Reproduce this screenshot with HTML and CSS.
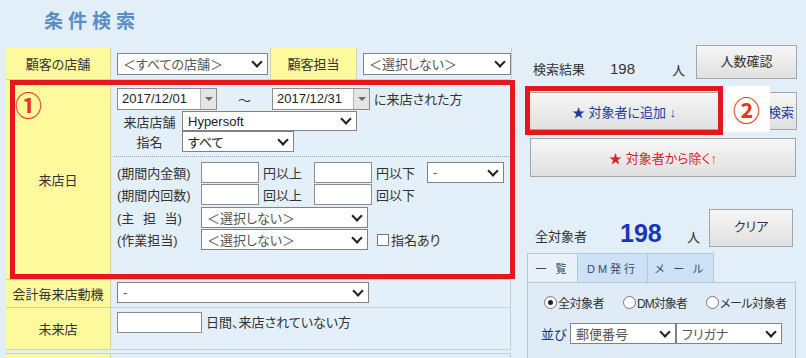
FILE: index.html
```html
<!DOCTYPE html>
<html lang="ja">
<head>
    <meta charset="UTF-8">
    <meta name="viewport" content="width=device-width, initial-scale=1.0">
    <title>条件検索</title>
    <link rel="stylesheet" href="styles.css">
</head>
<body>
    <div class="screen">
        <div class="left">
            <h1 class="title">条件検索</h1>
            <div class="form">
                <div class="row row-shop">
                    <div class="label">顧客の店舗</div>
                    <div class="cell cell-shop"><div class="sel sel-shop"><span>＜すべての店舗＞</span></div></div>
                    <div class="label label-staff">顧客担当</div>
                    <div class="cell"><div class="sel sel-staff"><span>＜選択しない＞</span></div></div>
                </div>
                <div class="row row-visit">
                    <div class="label">来店日</div>
                    <div class="cell visit">
                        <div class="line">
                            <div class="date"><span>2017/12/01</span><div class="drop"></div></div>
                            <span class="tilde">～</span>
                            <div class="date date-to"><span>2017/12/31</span><div class="drop"></div></div>
                            <span class="after">に来店された方</span>
                        </div>
                        <div class="line line-sub">
                            <span class="sub-label">来店店舗</span>
                            <div class="sel sel-store"><span class="dark">Hypersoft</span></div>
                        </div>
                        <div class="line line-sub">
                            <span class="sub-label">指名</span>
                            <div class="sel sel-nominate"><span class="dark">すべて</span></div>
                        </div>
                        <div class="dots"></div>
                        <div class="line line-q first">
                            <span class="q-label">(期間内金額)</span>
                            <div class="box"></div>
                            <span class="unit">円以上</span>
                            <div class="box"></div>
                            <span class="unit">円以下</span>
                            <div class="sel sel-range"><span>-</span></div>
                        </div>
                        <div class="line line-q">
                            <span class="q-label">(期間内回数)</span>
                            <div class="box"></div>
                            <span class="unit">回以上</span>
                            <div class="box"></div>
                            <span class="unit">回以下</span>
                        </div>
                        <div class="line line-q gap">
                            <span class="q-label spaced">(主 担 当)</span>
                            <div class="sel sel-person"><span>＜選択しない＞</span></div>
                        </div>
                        <div class="line line-q">
                            <span class="q-label">(作業担当)</span>
                            <div class="sel sel-person"><span>＜選択しない＞</span></div>
                            <span class="check"></span>
                            <span>指名あり</span>
                        </div>
                    </div>
                </div>
                <div class="row row-motive">
                    <div class="label">会計毎来店動機</div>
                    <div class="cell"><div class="sel sel-motive"><span>-</span></div></div>
                </div>
                <div class="row row-absent">
                    <div class="label">未来店</div>
                    <div class="cell cell-absent">
                        <div class="box box-days"></div>
                        <span class="after">日間、来店されていない方</span>
                    </div>
                </div>
                <div class="row row-more">
                    <div class="label"></div>
                    <div class="cell"></div>
                </div>
            </div>
            <div class="mark-box mark-box-1"></div>
            <span class="mark mark-1">①</span>
        </div>

        <div class="right">
            <div class="stat-row">
                <span class="stat-label">検索結果</span>
                <span class="stat-num">198</span>
                <span class="stat-unit">人</span>
                <div class="btn btn-count">人数確認</div>
            </div>
            <div class="add-row">
                <div class="btn btn-add">★ 対象者に追加 ↓</div>
                <div class="btn btn-search">検索</div>
            </div>
            <div class="btn btn-remove">★ 対象者から除く↑</div>
            <div class="stat-row total-row">
                <span class="total-label">全対象者</span>
                <span class="total-num">198</span>
                <span class="total-unit">人</span>
                <div class="btn btn-clear">クリア</div>
            </div>
            <div class="tabs">
                <div class="tab active">一 覧</div>
                <div class="tab">DM発行</div>
                <div class="tab">メ ー ル</div>
            </div>
            <div class="panel">
                <div class="radios">
                    <span class="radio on"></span><span class="radio-text">全対象者</span>
                    <span class="radio"></span><span class="radio-text radio-dm">DM対象者</span>
                    <span class="radio"></span><span class="radio-text radio-mail">メール対象者</span>
                </div>
                <div class="sort">
                    <span class="sort-label">並び</span>
                    <div class="sel sel-sort"><span>郵便番号</span></div>
                    <div class="sel sel-sort"><span>フリガナ</span></div>
                </div>
            </div>
            <div class="mark-box mark-box-2"></div>
            <div class="mark-cover"><span class="mark">②</span></div>
        </div>
    </div>
</body>
</html>
```

FILE: styles.css
```css
* {
    box-sizing: border-box;
}

body {
    margin: 0;
    width: 806px;
    height: 358px;
    overflow: hidden;
    background: #e2eff8;
    font-family: "Liberation Sans", "Noto Sans CJK JP", sans-serif;
    font-size: 13px;
    color: #333;
    font-feature-settings: "palt";
}

.screen {
    display: flex;
    height: 358px;
}

.left {
    width: 516px;
    flex: none;
    position: relative;
}

.title {
    margin: 0;
    height: 48px;
    padding: 10px 0 0 44px;
    font-size: 19px;
    line-height: 24px;
    font-weight: 700;
    letter-spacing: 5px;
    color: #5b8ec6;
}

/* form table */
.form {
    margin-left: 6px;
    width: 505px;
}
.row {
    display: flex;
    border-bottom: 1px solid #c6d0d8;
}
.label {
    width: 105px;
    flex: none;
    display: flex;
    align-items: center;
    justify-content: center;
    background: #fffa9e;
    border-right: 1px solid #d6d3a4;
    color: #333;
}
.cell {
    flex: 1;
    display: flex;
    align-items: center;
    padding-left: 6px;
    background: #e4f0f9;
    border-right: 1px solid #c6d0d8;
}
.row-shop {
    height: 32px;
}
.cell-shop {
    flex: none;
    width: 159px;
    border-right: none;
}
.label-staff {
    width: 87px;
    border-left: 1px solid #d6d3a4;
}
.row-visit {
    height: 200px;
}
.row-motive {
    height: 28px;
}
.row-motive .cell {
    align-items: flex-start;
    padding-top: 2px;
}
.row-absent {
    height: 42px;
}
.cell-absent {
    align-items: flex-start;
    padding-top: 4px;
}
.row-more {
    height: 20px;
    margin-top: 3px;
    border-top: 1px solid #c6d0d8;
}

/* controls */
.sel {
    display: flex;
    align-items: center;
    justify-content: space-between;
    height: 21px;
    padding: 0 6px 0 5px;
    background: #fff;
    border: 1px solid #828282;
    color: #555;
    white-space: nowrap;
}
.sel::after {
    content: "";
    width: 6px;
    height: 6px;
    margin-top: -4px;
    border-right: 2px solid #222;
    border-bottom: 2px solid #222;
    transform: rotate(45deg);
}
.sel .dark {
    color: #222;
}
.sel-shop {
    width: 151px;
    height: 22px;
}
.sel-staff {
    width: 148px;
    height: 22px;
}
.sel-store {
    width: 175px;
    height: 20px;
}
.sel-nominate {
    width: 112px;
}
.sel-range {
    width: 77px;
}
.sel-person {
    width: 167px;
}
.sel-motive {
    width: 252px;
}
.sel-sort {
    width: 106px;
    height: 21px;
}

.date {
    display: flex;
    width: 100px;
    height: 22px;
    background: #fff;
    border: 1px solid #8c8c8c;
    color: #222;
}
.date span {
    flex: 1;
    padding-left: 4px;
    line-height: 20px;
}
.date-to {
    width: 98px;
}
.drop {
    width: 16px;
    display: flex;
    align-items: center;
    justify-content: center;
    background: #e4e4e4;
    border-left: 1px solid #b4b4b4;
}
.drop::after {
    content: "";
    border-left: 4px solid transparent;
    border-right: 4px solid transparent;
    border-top: 4px solid #6a6a6a;
}

.box {
    width: 58px;
    height: 21px;
    flex: none;
    background: #fff;
    border: 1px solid #8c8c8c;
}
.box-days {
    width: 85px;
}
.check {
    width: 12px;
    height: 12px;
    margin: 0 2px 0 9px;
    background: #fff;
    border: 1px solid #777;
}

/* visit block */
.visit {
    display: block;
    padding: 8px 0 0 6px;
}
.line {
    display: flex;
    align-items: center;
    height: 22px;
}
.tilde {
    width: 55px;
    text-align: center;
}
.after {
    margin-left: 4px;
    line-height: 21px;
    color: #333;
}
.line-sub {
    height: 20px;
    margin-top: 1px;
}
.line-sub + .line-sub {
    height: 21px;
    margin-top: 0;
}
.sub-label {
    width: 65px;
    text-align: center;
}
.dots {
    width: 395px;
    margin: 4px 0 0 -3px;
    border-top: 1px dotted #8ea6b8;
}
.line-q {
    height: 21px;
    margin-top: 1px;
}
.line-q.first {
    margin-top: 5px;
}
.line-q.gap {
    margin-top: 2px;
}
.q-label {
    width: 84px;
    flex: none;
}
.spaced {
    word-spacing: 5px;
}
.unit {
    width: 55px;
    padding-left: 4px;
}

/* markers */
.mark-box {
    position: absolute;
    border: 5px solid #e5161e;
}
.mark-box-1 {
    left: 10px;
    top: 80px;
    width: 505px;
    height: 199px;
}
.mark {
    font-family: "Noto Sans CJK JP", sans-serif;
    font-size: 27px;
    line-height: 27px;
    font-weight: 700;
    color: #e8381c;
}
.mark-1 {
    position: absolute;
    left: 15px;
    top: 91px;
}

/* right side */
.right {
    width: 290px;
    position: relative;
    padding-top: 45px;
}
.btn {
    display: flex;
    align-items: center;
    justify-content: center;
    background: linear-gradient(#f6f6f6, #e0e0e0);
    border: 1px solid #a6a6a6;
    color: #333;
    white-space: nowrap;
}
.stat-row {
    display: flex;
    align-items: flex-end;
    height: 34px;
}
.stat-label {
    width: 77px;
    margin-left: 17px;
    line-height: 16px;
    margin-bottom: 1px;
}
.stat-num {
    width: 62px;
    font-size: 15px;
    line-height: 16px;
    margin-bottom: 2px;
    color: #333;
}
.stat-unit {
    width: 24px;
    line-height: 16px;
}
.btn-count {
    width: 101px;
    align-self: stretch;
    padding-bottom: 4px;
}
.add-row {
    display: flex;
    margin-top: 13px;
    height: 38px;
}
.btn-add {
    width: 190px;
    margin-left: 13px;
    color: #1f3aa6;
}
.btn-search {
    width: 75px;
    margin-left: 3px;
    justify-content: flex-end;
    padding-right: 2px;
    color: #1f3aa6;
}
.btn-remove {
    width: 266px;
    height: 39px;
    margin: 8px 0 0 14px;
    color: #d9232a;
}
.total-row {
    height: 38px;
    margin-top: 32px;
}
.total-label {
    width: 85px;
    margin-left: 19px;
    line-height: 16px;
    margin-bottom: 2px;
}
.total-num {
    width: 67px;
    font-size: 25px;
    font-weight: 700;
    line-height: 26px;
    color: #1537c0;
    margin-bottom: 1px;
}
.total-unit {
    width: 22px;
    line-height: 16px;
    margin-bottom: 1px;
}
.btn-clear {
    width: 84px;
    align-self: stretch;
    padding-bottom: 6px;
}

.tabs {
    display: flex;
    margin: 6px 0 0 11px;
    height: 29px;
}
.tab {
    display: flex;
    align-items: center;
    justify-content: center;
    height: 29px;
    width: 70px;
    font-size: 11px;
    letter-spacing: 3px;
    color: #3a4a66;
    background: #cce1f5;
    border: 1px solid #b5c8da;
    border-bottom: none;
    border-left: none;
}
.tab.active {
    width: 51px;
    background: #e9f1f8;
    border-left: 1px solid #b5c8da;
}
.tab:last-child {
    width: 66px;
}
.panel {
    width: 269px;
    height: 90px;
    margin-left: 11px;
    padding: 11px 0 0 16px;
    background: #dfebf6;
    border: 1px solid #b5c8da;
}
.radios {
    display: flex;
    align-items: center;
    height: 16px;
    font-size: 12px;
    letter-spacing: -0.5px;
}
.radio {
    width: 13px;
    height: 13px;
    flex: none;
    position: relative;
    border-radius: 50%;
    background: #fff;
    border: 1px solid #777;
}
.radio.on::after {
    content: "";
    position: absolute;
    left: 3px;
    top: 3px;
    width: 5px;
    height: 5px;
    border-radius: 50%;
    background: #222;
}
.radio-text {
    width: 66px;
    flex: none;
    padding-left: 1px;
    white-space: nowrap;
    color: #333;
}
.radio-dm {
    width: 70px;
    letter-spacing: -1px;
}
.radio-mail {
    width: auto;
}
.sort {
    display: flex;
    align-items: center;
    margin: 13px 0 0 -3px;
}
.sort-label {
    width: 29px;
    color: #1b2f8c;
}

.mark-box-2 {
    left: 9px;
    top: 86px;
    width: 198px;
    height: 49px;
}
.mark-cover {
    position: absolute;
    left: 207px;
    top: 86px;
    width: 47px;
    height: 46px;
    display: flex;
    align-items: center;
    justify-content: center;
    background: #fff;
}
```
